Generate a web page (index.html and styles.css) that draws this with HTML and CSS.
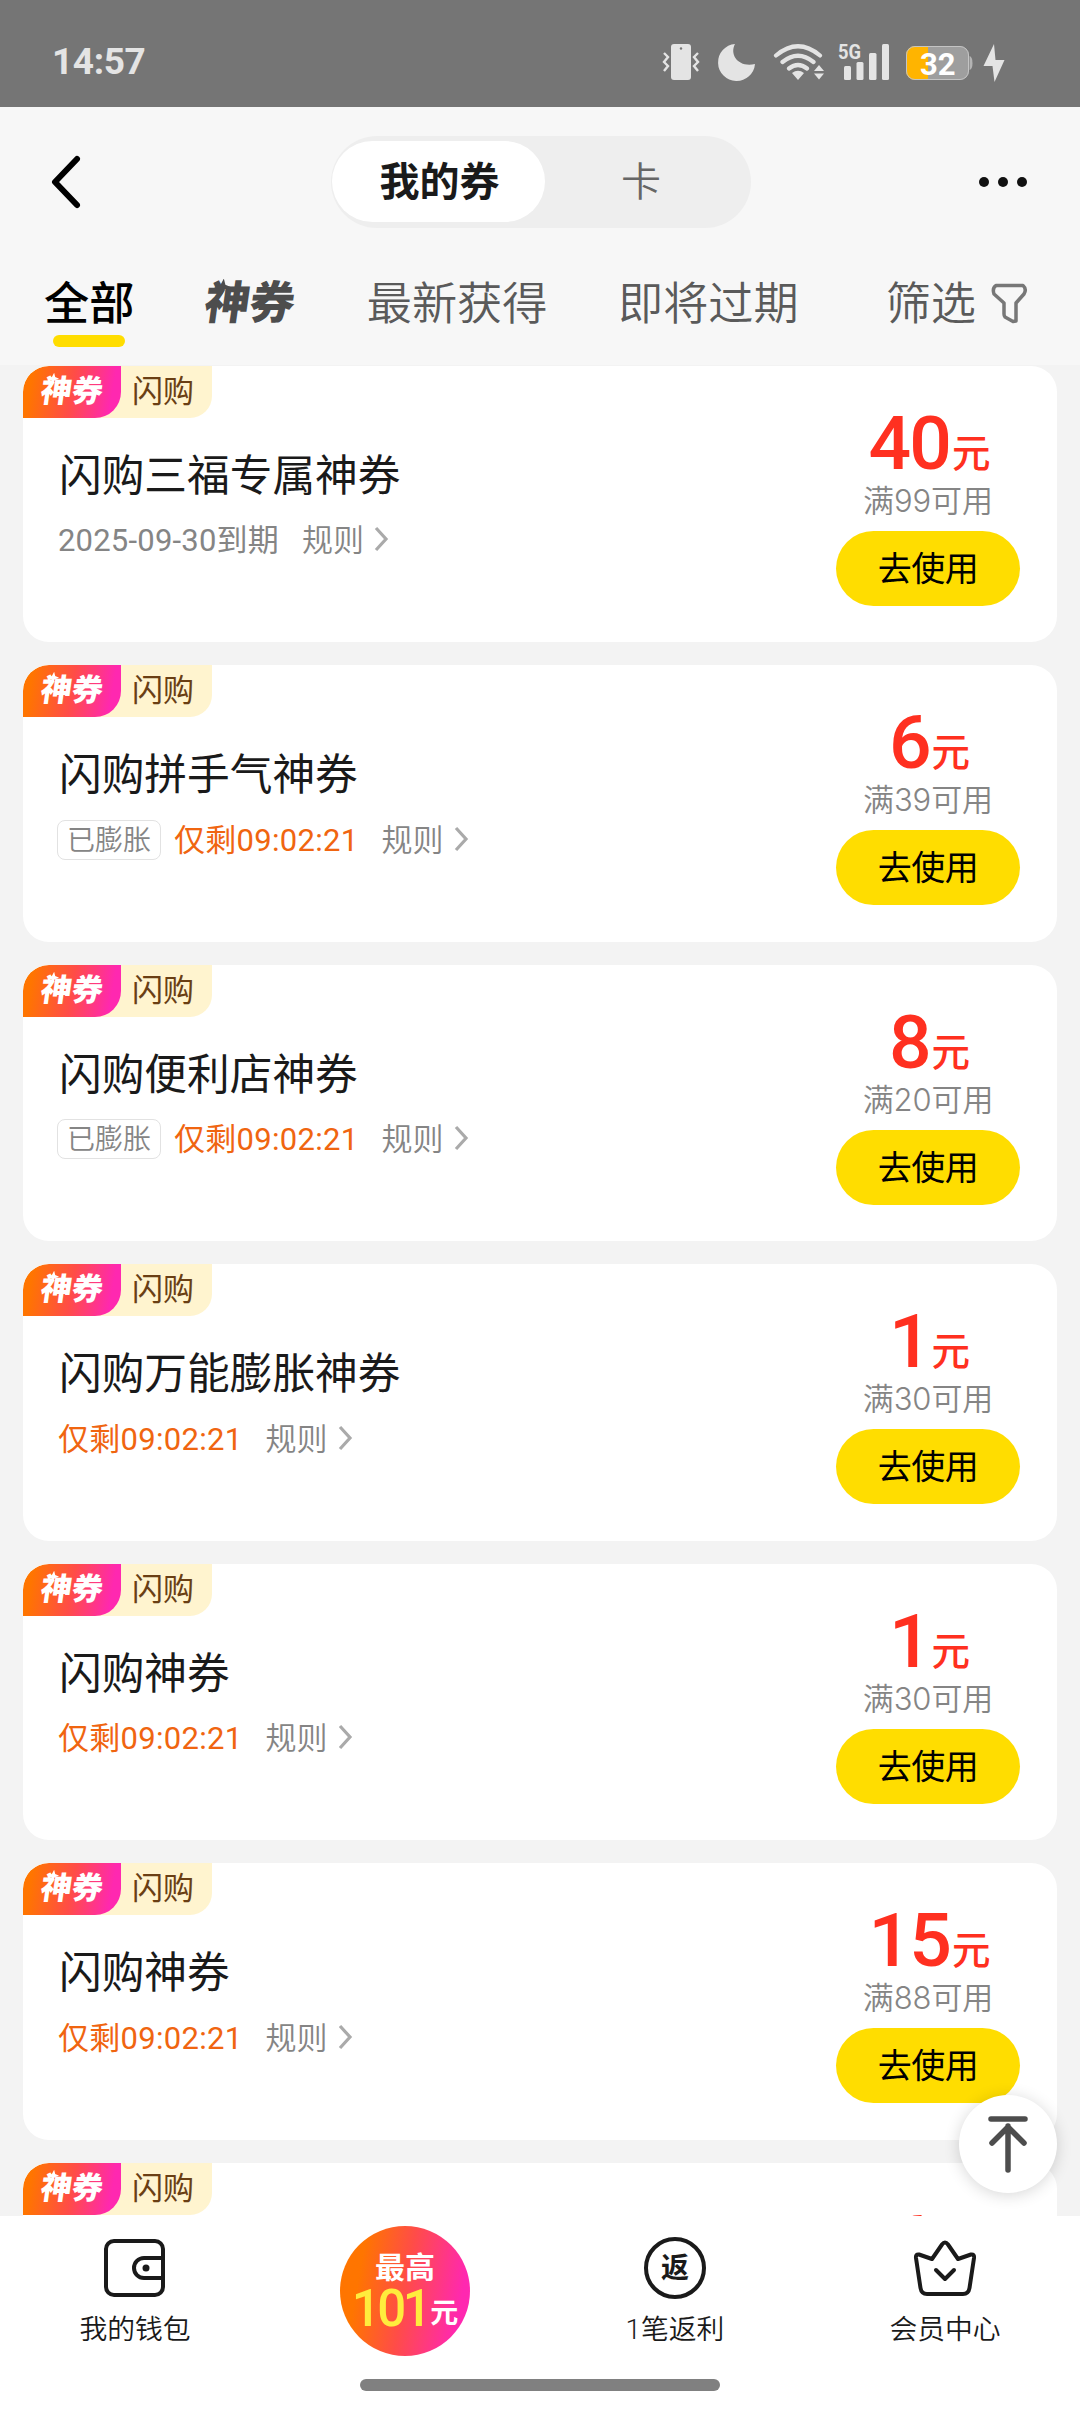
FILE: index.html
```html
<!DOCTYPE html>
<html lang="zh-CN">
<head>
<meta charset="utf-8">
<title>我的券</title>
<link rel="stylesheet" href="styles.css">
</head>
<body>
<div class="screen">
  <div class="status">
    <span class="time">14:57</span>
    <svg class="sysicons" width="350" height="50" viewBox="660 36 350 50" fill="#e4e4e4">
      <rect x="671" y="44" width="20" height="36" rx="3"/><circle cx="681" cy="48.500" r="1.200" fill="#757575"/>
      <path d="M664 53l4 4-4 5 4 4-4 5M698 53l-4 4 4 5-4 4 4 5" fill="none" stroke="#e4e4e4" stroke-width="2.400"/>
      <path d="M735 44C729 55 739 68 755 64A18.500 18.500 0 1 1 735 44z"/>
      <g fill="none" stroke="#e4e4e4" stroke-width="4.200" stroke-linecap="round"><path d="M776 55.500Q798 37 820 55.500M782.500 62Q798 49.500 813.500 62M789 68.500Q798 61.500 807 68.500"/></g>
      <path d="M792 73Q798 68.500 804 73L798 80zM814 71l5-6 5 6zM814 73.500l5 6 5-6z"/>
      <text class="net" x="838" y="58.500" textLength="23" lengthAdjust="spacingAndGlyphs">5G</text>
      <g><rect x="844" y="66" width="7" height="14" rx="1.500"/><rect x="856.500" y="62" width="7" height="18" rx="1.500"/><rect x="869" y="53" width="7.500" height="27" rx="1.500"/><rect x="882" y="44" width="7" height="36" rx="1.500"/></g>
      <rect x="906" y="46" width="63" height="34" rx="9" fill="#9e9e9e"/>
      <path d="M928 46h-13a9 9 0 0 0-9 9v16a9 9 0 0 0 9 9h13z" fill="#ffb400"/>
      <rect x="906.500" y="46.500" width="62" height="33" rx="8.500" fill="none" stroke="#c4c4c4"/>
      <path d="M969.500 56q3 1 3 7t-3 7z" fill="#b4b4b4"/>
      <text class="level" x="920" y="74.500">32</text>
      <path d="M994 44l-10.500 22h9L994.500 82 1004.500 60h-9z"/>
    </svg>
  </div>
  <header class="head">
    <div class="nav">
      <svg class="back" width="34" height="56" viewBox="0 0 34 56"><path d="M28 5L6 28 28 51" fill="none" stroke="#000" stroke-width="6" stroke-linecap="round" stroke-linejoin="round"/></svg>
      <div class="segment"><span class="seg on">我的券</span><span class="seg">卡</span></div>
      <div class="more"><i></i><i></i><i></i></div>
    </div>
    <div class="tabs">
      <span class="tab on">全部</span>
      <span class="tab brand">神券</span>
      <span class="tab">最新获得</span>
      <span class="tab">即将过期</span>
      <span class="tab filter">筛选<svg width="37" height="41" viewBox="0 0 37 41"><path d="M5 2.500H32Q36 6 33 11L25 20V38L22 38.500 14 34Q13 33 13 31V20L3 11Q1 5 5 2.500z" fill="none" stroke="#777" stroke-width="3.500" stroke-linejoin="round"/></svg></span>
    </div>
  </header>
  <main class="list"></main>
  <button class="totop"><svg width="44" height="60" viewBox="0 0 44 60"><path d="M5 5H39M22 12V56M6 29L22 13 38 29" fill="none" stroke="#4d4d4d" stroke-width="5.500" stroke-linecap="round" stroke-linejoin="round"/></svg></button>
  <footer class="bar">
    <div class="item">
      <svg width="64" height="64" viewBox="0 0 64 64" fill="none" stroke="#1a1a1a" stroke-width="4"><rect x="3" y="5" width="57" height="54" rx="8"/><path d="M60 22H41a10 10 0 0 0 0 20H60"/><circle cx="43" cy="32" r="3.500" fill="#1a1a1a" stroke="none"/></svg>
      <span>我的钱包</span>
    </div>
    <div class="item"><div class="promo"><b>最高</b><p><strong>101</strong><b>元</b></p></div></div>
    <div class="item"><div class="coin">返</div><span>1笔返利</span></div>
    <div class="item">
      <svg width="64" height="64" viewBox="0 0 64 64" fill="none" stroke="#1a1a1a" stroke-width="4" stroke-linecap="round" stroke-linejoin="round"><path d="M19 23L29 8.500Q32 4.500 35 8.500L45 23 58 18.500Q61.500 18 61 22L56.500 52Q55.500 58 50 58H14Q8.500 58 7.500 52L3 22Q2.500 18 6 18.500z"/><path d="M23 34L32 43 41 34"/></svg>
      <span>会员中心</span>
    </div>
    <div class="home"></div>
  </footer>
</div>
<script src="app.js"></script>
</body>
</html>
```
FILE: styles.css
```css
* { box-sizing: border-box; }
body { margin: 0; background: #f3f3f3; font-family: Roboto, "Noto Sans CJK SC", sans-serif; color: #1a1a1a; }
i { font-style: normal; }
p { margin: 0; }
.screen { position: relative; width: 1080px; height: 2412px; overflow: hidden; display: flex; flex-direction: column; }
.status { flex: none; height: 107px; background: #757575; display: flex; justify-content: space-between; padding: 36px 70px 0 52px; color: #e4e4e4; }
.time { font: 700 37px/52px Roboto, sans-serif; letter-spacing: -.4px; }
.net { font: 700 20px Roboto, sans-serif; }
.level { font: 700 31px Roboto, sans-serif; fill: #fff; }
.head { flex: none; height: 258px; background: #f7f7f7; padding-top: 29px; }
.nav { height: 92px; display: flex; align-items: center; justify-content: space-between; padding: 0 53px 0 49px; }
.segment { width: 420px; height: 92px; border-radius: 46px; background: #eee; display: flex; padding: 5px 1px; margin-left: 248px; margin-right: auto; }
.seg { width: 192px; height: 81px; line-height: 83px; text-align: center; font-size: 40px; color: #666; font-weight: 350; }
.seg.on { width: 213px; padding-left: 2px; border-radius: 41px; background: #fff; color: #1a1a1a; font-weight: 700; }
.more { display: flex; gap: 9px; }
.more i { width: 10px; height: 10px; border-radius: 50%; background: #111; }
.tabs { display: flex; align-items: flex-start; padding: 47px 52px 0 44px; height: 137px; font-size: 45.2px; line-height: 60px; color: #5a5a5a; font-weight: 350; white-space: nowrap; }
.tab { margin-right: 70.5px; }
.tab.on { color: #000; font-weight: 500; display: flex; flex-direction: column; align-items: center; }
.tab.on::after { content: ""; width: 72px; height: 12px; border-radius: 6px; background: #fd0; }
.brand, .logo i { position: relative; font-weight: 900; transform: skewX(-8deg); }
.tab.brand { color: #4d4d4d; letter-spacing: -.5px; margin-right: 72.5px; line-height: 57px; }
.brand::before, .logo i::before { content: ""; position: absolute; left: .15em; top: .08em; width: .38em; height: .38em; background: currentColor; clip-path: polygon(50% 0, 64% 36%, 100% 50%, 64% 64%, 50% 100%, 36% 64%, 0 50%, 36% 36%); }
.filter { margin: 0 0 0 auto; display: flex; align-items: center; gap: 15px; }
.filter svg { margin-top: -4px; }
.list { flex: none; height: 1851px; overflow: hidden; padding: .5px 23px 0; display: flex; flex-direction: column; gap: 23px; }
.card { flex: none; height: 276.6px; border-radius: 26px; background: #fff; display: flex; justify-content: space-between; overflow: hidden; }
.tags { display: inline-flex; height: 52px; background: #fff4cf; border-bottom-right-radius: 22px; padding-right: 18px; font-size: 31px; line-height: 51px; color: #6a3f14; }
.logo { width: 98px; margin-right: 11px; border-radius: 26px 0 26px 0; background: linear-gradient(100deg, #ff7500 10%, #ff4c48 50%, #ff28b0 88%); color: #fff; text-align: center; }
.logo i { display: inline-block; }
.logo i::before { top: .22em; }
.title { margin: 26px 0 0 36px; font-size: 42.7px; line-height: 64px; white-space: nowrap; font-weight: 400; }
.meta { margin: 9px 0 0 35px; height: 42px; display: flex; align-items: center; font-size: 31px; color: #858585; font-weight: 350; white-space: nowrap; }
.date { font-weight: 400; letter-spacing: .2px; }
.left-time { color: #f06510; font-weight: 400; letter-spacing: .3px; }
.grown { width: 104px; height: 40px; border: 1px solid #e2e2e2; border-radius: 8px; font-size: 28px; line-height: 39px; text-align: center; margin: 5px 13px 0 -1px; }
.rule { margin-left: 23px; display: flex; align-items: center; gap: 9px; }
.rule svg { margin-top: 3px; }
.side { width: 184px; margin-right: 37px; display: flex; flex-direction: column; align-items: center; padding-top: 37px; }
.price { height: 80px; line-height: 80px; display: flex; align-items: baseline; color: #ff3020; font-size: 75px; font-weight: 500; letter-spacing: -2px; padding-left: 3px; }
.price b { font-size: 38.5px; font-weight: 500; letter-spacing: 0; margin-left: 2px; transform: translateY(-2px); }
.price:only-child { padding: 2px 36px 0 0; }
.cond { font-family: Inter, "Noto Sans CJK SC", sans-serif; font-size: 31px; line-height: 40px; height: 40px; margin-top: -2px; color: #858585; font-weight: 350; letter-spacing: -.1px; white-space: nowrap; }
.use { width: 184px; height: 75px; margin-top: 10px; border-radius: 38px; background: #fd0; text-align: center; font-size: 34px; line-height: 77px; letter-spacing: -.5px; font-weight: 400; color: #000; }
.totop { position: absolute; left: 959px; top: 2095px; width: 98px; height: 98px; border: 0; padding: 0; border-radius: 50%; background: #fff; box-shadow: 0 2px 16px rgba(0,0,0,.16); display: grid; place-items: center; z-index: 2; }
.bar { position: relative; flex: none; height: 196px; background: #fff; display: grid; grid-template-columns: repeat(4, 1fr); }
.item { display: flex; flex-direction: column; align-items: center; padding-top: 20px; font-size: 27.8px; line-height: 40px; font-weight: 350; }
.item span { margin-top: 10px; }
.promo { width: 130px; height: 130px; margin-top: -10px; border-radius: 50%; background: linear-gradient(100deg, #ff7500 18%, #ff4c48 50%, #ff28b0 88%); color: #fff; text-align: center; padding-top: 25px; line-height: 34px; font-size: 30px; }
.promo b { font-weight: 700; }
.promo p { display: flex; justify-content: center; align-items: baseline; font-size: 28px; line-height: 48px; }
.promo p b { transform: translateY(-3px); }
.promo strong { font: 500 51px/48px Roboto, sans-serif; letter-spacing: -3.5px; margin-right: 2px; color: #ffec3d; }
.coin { width: 62px; height: 62px; margin: 1px; border: 4px solid #1a1a1a; border-radius: 50%; text-align: center; font-weight: 700; font-size: 28px; line-height: 55px; }
.home { position: absolute; left: 360px; top: 163px; width: 360px; height: 12px; border-radius: 6px; background: #808080; }
```
FILE: app.js
```js
const coupons = [
  { title: "闪购三福专属神券", date: "2025-09-30到期", value: 40, min: 99 },
  { title: "闪购拼手气神券", grown: true, value: 6, min: 39 },
  { title: "闪购便利店神券", grown: true, value: 8, min: 20 },
  { title: "闪购万能膨胀神券", value: 1, min: 30 },
  { title: "闪购神券", value: 1, min: 30 },
  { title: "闪购神券", value: 15, min: 88 },
  { value: 6 }
];
const arrow = '<svg width="16" height="26" viewBox="0 0 16 26"><path d="M3 2L13 13 3 24" fill="none" stroke="#aaa" stroke-width="3.200"/></svg>';

const details = c => `
  <div class="title">${c.title}</div>
  <div class="meta">${c.grown ? '<span class="grown">已膨胀</span>' : ""}${c.date ? `<span class="date">${c.date}</span>` : '<span class="left-time">仅剩09:02:21</span>'}<span class="rule">规则${arrow}</span></div>`;

const action = c => `
  <div class="cond">满${c.min}可用</div>
  <div class="use">去使用</div>`;

document.querySelector(".list").innerHTML = coupons.map(c => `
  <article class="card">
    <div>
      <div class="tags"><span class="logo"><i>神券</i></span>闪购</div>
      ${c.title ? details(c) : ""}
    </div>
    <div class="side">
      <div class="price">${c.value}${c.min ? "<b>元</b>" : ""}</div>
      ${c.min ? action(c) : ""}
    </div>
  </article>`).join("");
```
